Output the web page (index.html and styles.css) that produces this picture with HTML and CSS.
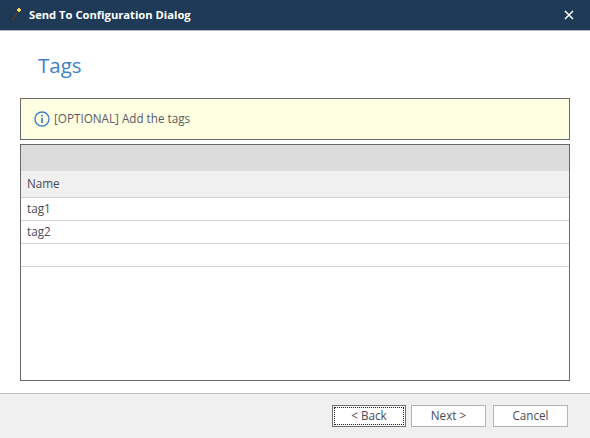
FILE: index.html
```html
<!DOCTYPE html>
<html lang="en">
<head>
<meta charset="utf-8">
<title>Send To Configuration Dialog</title>
<link rel="stylesheet" href="styles.css">
</head>
<body>
<div class="dialog">
  <header class="titlebar">
    <svg class="wand" width="16" height="16" viewBox="0 0 16 16"><path d="M1.500 16 L8 5.500" stroke="#2e2a1c" stroke-width="1.700" fill="none"/><path d="M2 15 L7.500 6" stroke="#8a7a40" stroke-width=".5" fill="none"/><path d="M7 3 h1 v-1 h2 v1 h1 v2 h-1 v1 h-2 v-1 h-1z" fill="#f4c430"/><rect x="8" y="3" width="1.500" height="1.500" fill="#fff3a0"/></svg>
    <span class="title">Send To Configuration Dialog</span>
    <svg class="close" width="10" height="10" viewBox="0 0 10 10"><path d="M1 1 L9 9 M9 1 L1 9" stroke="#fff" stroke-width="1.500" fill="none"/></svg>
  </header>
  <main class="content">
    <h1 class="heading">Tags</h1>
    <div class="notice">
      <svg class="info" width="16" height="16" viewBox="0 0 16 16"><circle cx="8" cy="8" r="7" fill="none" stroke="#3f83c4" stroke-width="1.400"/><rect x="7.200" y="3.800" width="1.700" height="1.700" fill="#3f83c4"/><rect x="7.200" y="6.800" width="1.700" height="5.200" fill="#3f83c4"/></svg>
      <span>[OPTIONAL] Add the tags</span>
    </div>
    <div class="grid">
      <div class="group"></div>
      <div class="columns">Name</div>
      <div class="row">tag1</div>
      <div class="row">tag2</div>
      <div class="row"></div>
    </div>
  </main>
  <footer class="footer">
    <button class="btn focus"><span>&lt; Back</span></button>
    <button class="btn next">Next &gt;</button>
    <button class="btn">Cancel</button>
  </footer>
</div>
</body>
</html>
```
FILE: styles.css
```css
* { box-sizing: border-box; }
html, body { margin: 0; padding: 0; }
body { width: 590px; height: 438px; overflow: hidden; background: #fff; font-family: "Open Sans", "Noto Sans", sans-serif; font-size: 11.7px; color: #4a4a55; }
.dialog { display: flex; flex-direction: column; height: 438px; }
.titlebar { height: 31px; flex: none; display: flex; align-items: center; background: #1e3a56; border-bottom: 1px solid #b4b8bc; padding: 0 16px 1px 10px; color: #fff; }
.wand { flex: none; margin-right: 3px; margin-top: -1px; }
.title { font-weight: 700; font-size: 11.2px; flex: 1; }
.close { flex: none; }
.content { flex: 1; display: flex; flex-direction: column; padding: 0 20px 12px; min-height: 0; }
.heading { margin: 20px 0 0 18px; height: 47px; font-weight: 400; font-size: 20.5px; line-height: 28px; color: #3f83c4; }
.notice { height: 42px; flex: none; display: flex; align-items: center; gap: 4px; padding: 0 0 2px 13px; background: #ffffe1; border: 1px solid #696969; color: #5a5a66; }
.info { margin-top: 2px; }
.grid { flex: 1; margin-top: 4px; border: 1px solid #696969; background: #fff; }
.group { height: 26px; background: #dcdcdc; }
.columns { height: 26px; padding: 0 6px; line-height: 24px; background: #f0f0f0; }
.row { height: 23px; padding: 0 6px; line-height: 20px; border-top: 1px solid #d2d2d2; }
.row:last-child { height: 24px; border-bottom: 1px solid #d2d2d2; }
.footer { height: 45px; flex: none; display: flex; justify-content: flex-end; align-items: flex-start; padding: 11px 22px 0 0; background: #f0f0f0; border-top: 1px solid #bcbcbc; }
.btn { width: 75px; height: 22px; padding: 0 0 2px; font: inherit; color: inherit; background: #fff; border: 1px solid #b4b4b4; margin-left: 7px; }
.next { margin-left: 5px; }
.focus { width: 74px; border-color: #6f6f6f; padding: 1px; }
.focus span { display: block; height: 100%; line-height: 15px; border: 1px dotted #222; }
```
